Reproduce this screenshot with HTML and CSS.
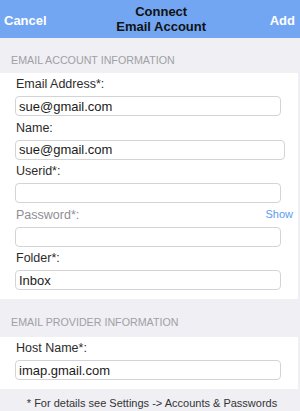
FILE: index.html
```html
<!DOCTYPE html>
<html>
<head>
<meta charset="UTF-8">
<title>Connect Email Account</title>
<link rel="stylesheet" href="styles.css">
</head>
<body>
	<div class="navBar">
		<span class="navButton">Cancel</span>
		<div class="navTitle">Connect<br>Email Account</div>
		<span class="navButton">Add</span>
	</div>

	<div class="sectionHeader">Email Account Information</div>
	<div class="formCard">
		<div class="field">
			<div class="fieldLabel">Email Address*:</div>
			<input type="text" class="fieldInput" value="sue@gmail.com">
		</div>
		<div class="field">
			<div class="fieldLabel">Name:</div>
			<input type="text" class="fieldInput wideInput" value="sue@gmail.com">
		</div>
		<div class="field">
			<div class="fieldLabel">Userid*:</div>
			<input type="text" class="fieldInput" value="">
		</div>
		<div class="field">
			<div class="fieldLabel mutedLabel">
				<span>Password*:</span>
				<span class="showLink">Show</span>
			</div>
			<input type="password" class="fieldInput" value="">
		</div>
		<div class="field">
			<div class="fieldLabel">Folder*:</div>
			<input type="text" class="fieldInput" value="Inbox">
		</div>
	</div>

	<div class="sectionHeader secondHeader">Email Provider Information</div>
	<div class="formCard">
		<div class="field">
			<div class="fieldLabel">Host Name*:</div>
			<input type="text" class="fieldInput" value="imap.gmail.com">
		</div>
	</div>

	<div class="footNote">* For details see Settings -&gt; Accounts &amp; Passwords</div>
</body>
</html>
```

FILE: styles.css
```css
body {
	margin: 0px;
	background-color: #efeff4;
	font-family: "Liberation Sans", Arial, sans-serif;
	color: #2b2b2b;
}

.navBar {
	display: flex;
	justify-content: space-between;
	align-items: center;
	height: 38px;
	padding: 0px 5px 0px 4px;
	background-color: #72a6f2;
}

.navButton {
	color: #ffffff;
	font-size: 13px;
	font-weight: bold;
	padding-top: 2px;
}

.navTitle {
	text-align: center;
	font-size: 13px;
	font-weight: bold;
	line-height: 15px;
	color: #111111;
	margin-left: 6px;
}

.sectionHeader {
	padding: 16px 0px 6px 11px;
	font-size: 10.7px;
	line-height: 13px;
	text-transform: uppercase;
	color: #a0a0a5;
}

.secondHeader {
	padding-top: 17px;
	padding-bottom: 8px;
}

.formCard {
	background-color: #ffffff;
	margin-right: 2px;
	padding: 2px 0px 9px 15px;
}

.field {
	margin-bottom: 2.5px;
}

.field:last-child {
	margin-bottom: 0px;
}

.fieldLabel {
	display: flex;
	justify-content: space-between;
	align-items: center;
	font-size: 12.5px;
	line-height: 18px;
	margin-bottom: 3px;
	padding-left: 1px;
	padding-right: 5px;
}

.mutedLabel {
	color: #8e8e93;
}

.showLink {
	font-size: 11px;
	color: #5b9cf0;
	margin-top: -2px;
}

.fieldInput {
	display: block;
	box-sizing: border-box;
	width: 266px;
	height: 20px;
	margin: 0px;
	padding: 0px 3px;
	border: 1px solid #d4d4d6;
	border-radius: 4px;
	font-family: "Liberation Sans", Arial, sans-serif;
	font-size: 13px;
	color: #1a1a1a;
	background-color: #ffffff;
}

.wideInput {
	width: 270px;
}

.footNote {
	text-align: center;
	font-size: 11px;
	line-height: 13px;
	padding-top: 8px;
	padding-left: 4px;
	color: #333333;
}
```
